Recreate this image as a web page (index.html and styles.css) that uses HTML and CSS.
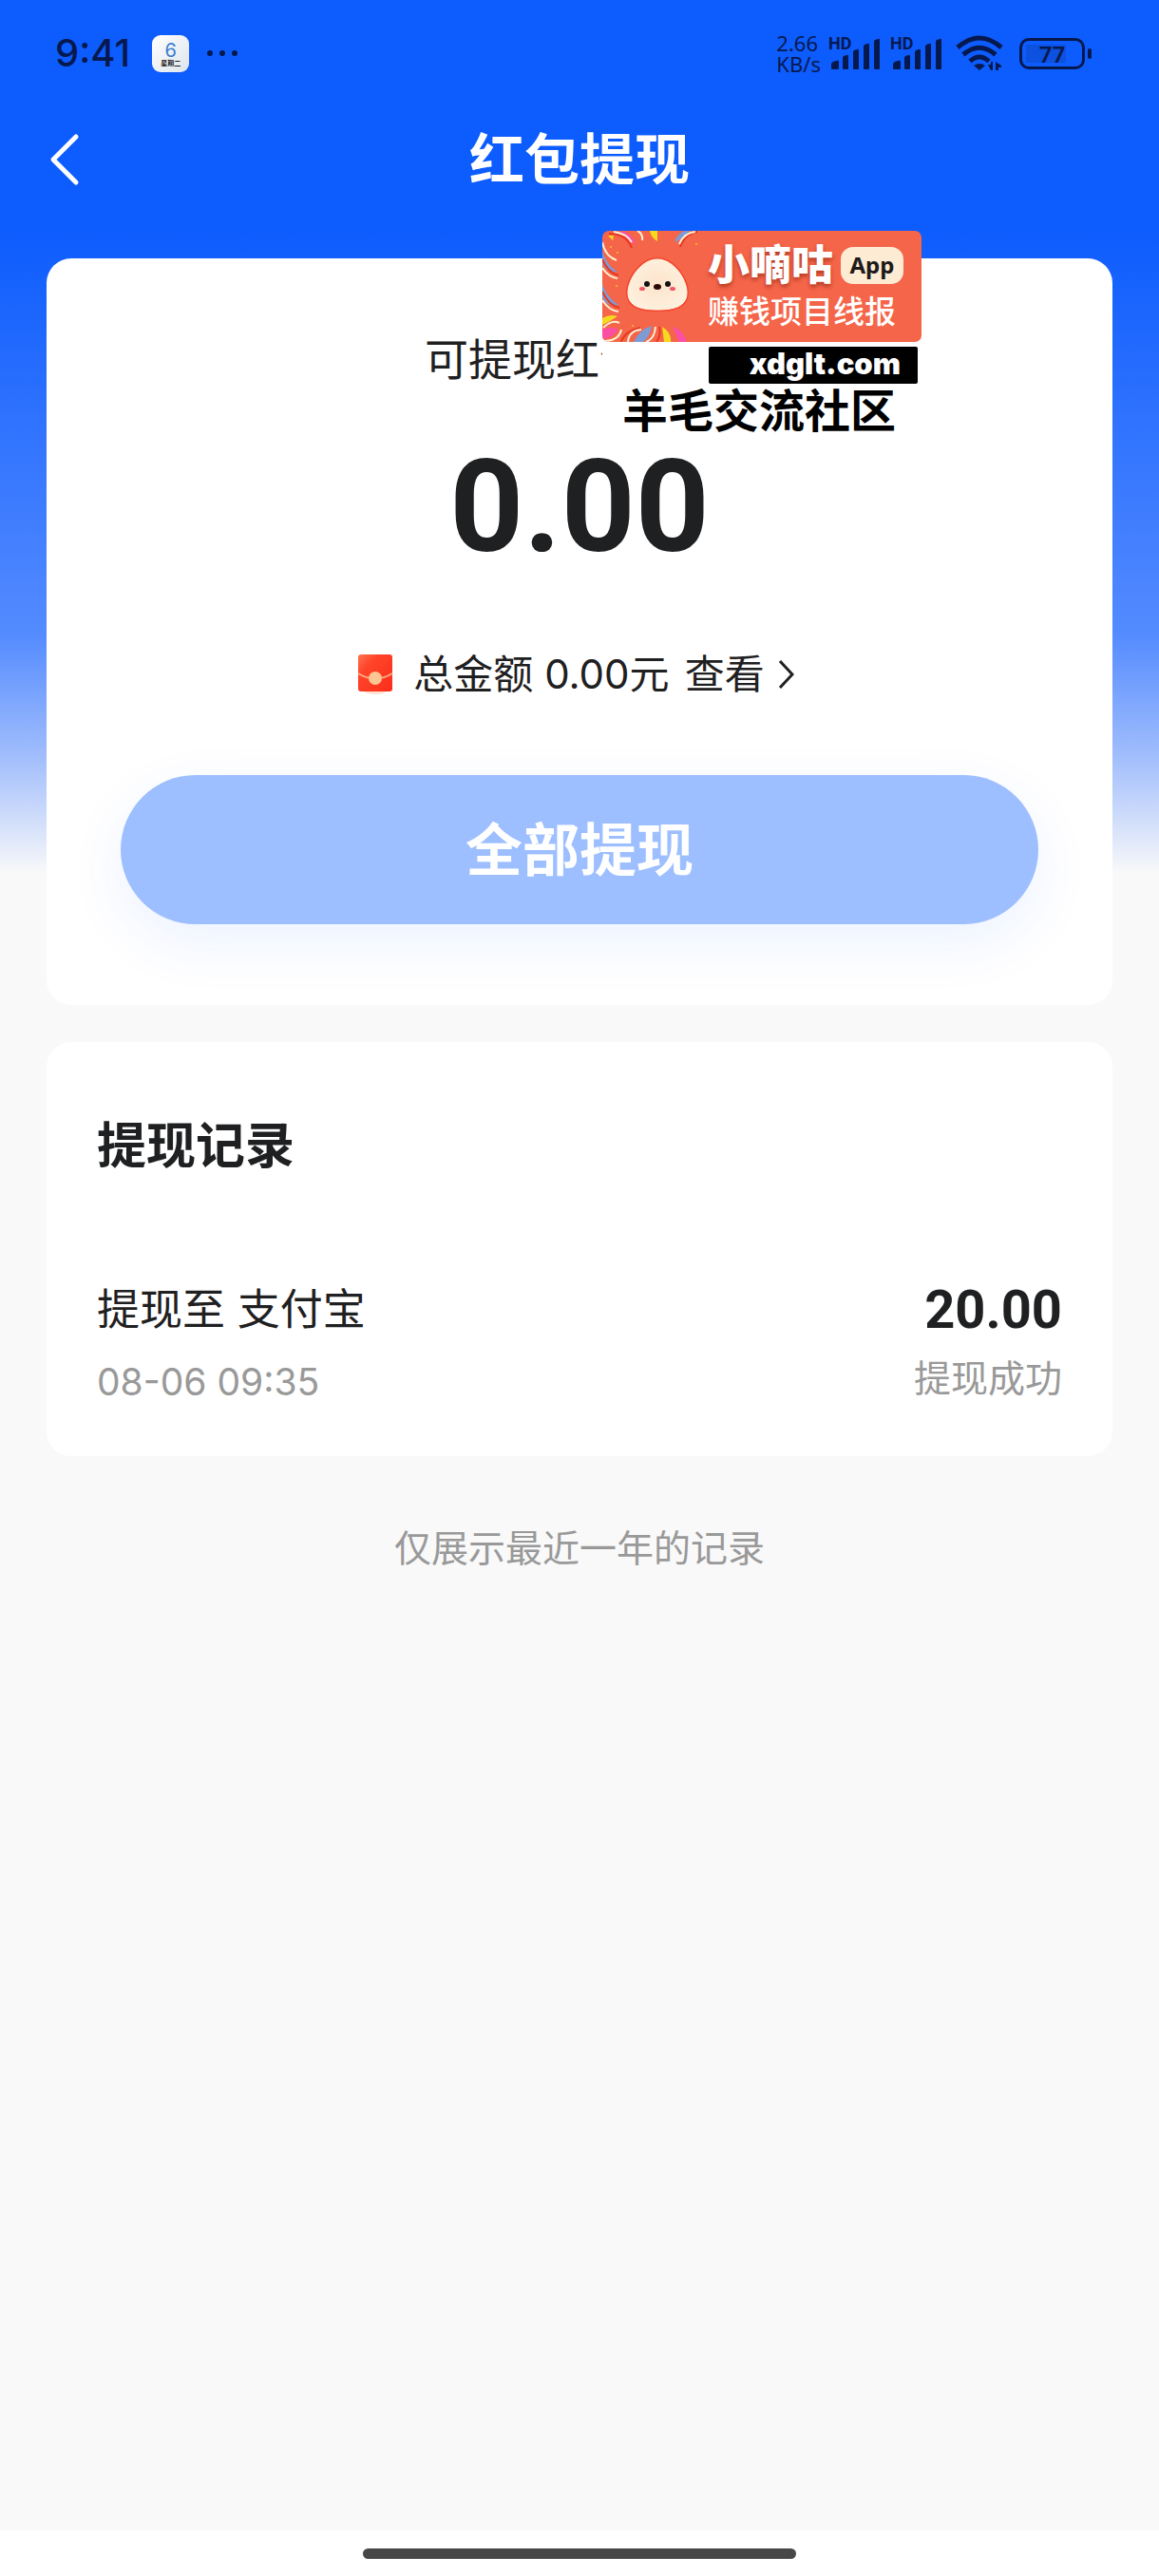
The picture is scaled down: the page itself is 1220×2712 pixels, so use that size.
FILE: index.html
```html
<!DOCTYPE html>
<html lang="zh-CN">
<head>
<meta charset="utf-8">
<meta name="viewport" content="width=device-width, initial-scale=1">
<title>红包提现</title>
<link rel="stylesheet" href="styles.css">
</head>
<body>
<div class="page">
  <div class="status">
    <div class="status-left">
      <span class="clock">9:41</span>
      <span class="calendar"><b class="cal-day">6</b><span class="cal-week">星期二</span></span>
      <svg class="dots" width="34" height="8" viewBox="0 0 34 8"><circle cx="4" cy="4" r="3"/><circle cx="17" cy="4" r="3"/><circle cx="30" cy="4" r="3"/></svg>
    </div>
    <div class="status-right">
      <span class="speed"><span>2.66</span><span>KB/s</span></span>
      <span class="signal"><span class="hd">HD</span>
        <svg width="55" height="36" viewBox="0 0 55 36"><path d="M3 34v-4q0-2 2-3l3-1q3-1 3 1v7q0 1-1 1H4q-1 0-1-1zM15 34V23q0-1 1-2l3-1q2-1 2 1v13q0 1-1 1h-4q-1 0-1-1zM26 34V17q0-1 1-2l3-1q2-1 2 1v19q0 1-1 1h-4q-1 0-1-1zM37 34V11q0-1 1-2l3-1q2-1 2 1v25q0 1-1 1h-4q-1 0-1-1zM48 34V6q0-1 1-2l3-1q2-1 2 1v30q0 1-1 1h-4q-1 0-1-1z"/></svg></span>
      <span class="signal"><span class="hd">HD</span>
        <svg width="55" height="36" viewBox="0 0 55 36"><path d="M3 34v-4q0-2 2-3l3-1q3-1 3 1v7q0 1-1 1H4q-1 0-1-1zM15 34V23q0-1 1-2l3-1q2-1 2 1v13q0 1-1 1h-4q-1 0-1-1zM26 34V17q0-1 1-2l3-1q2-1 2 1v19q0 1-1 1h-4q-1 0-1-1zM37 34V11q0-1 1-2l3-1q2-1 2 1v25q0 1-1 1h-4q-1 0-1-1zM48 34V6q0-1 1-2l3-1q2-1 2 1v30q0 1-1 1h-4q-1 0-1-1z"/></svg></span>
      <svg class="wifi" width="50" height="38" viewBox="0 0 50 38"><g fill="none" stroke="#06194f" stroke-width="5"><path d="M2 13Q25-7 48 13"/><path d="M8 20.500Q25 6 42 20.500"/><path d="M15 27.500Q25 18.500 35 27.500"/></g><path fill="#06194f" d="M19 32q6-4 12 0l-6 5zM34 31h3v-3h2v9h-2zM42 37v-9l6 4v2h-3v3z"/></svg>
      <span class="battery"><span class="battery-body">77</span><span class="battery-tip"></span></span>
    </div>
  </div>

  <header class="nav">
    <button class="back" type="button" aria-label="返回"><svg width="32" height="56" viewBox="0 0 32 56"><path d="M28 4L4 28l24 24" fill="none" stroke="#fff" stroke-width="5" stroke-linecap="round" stroke-linejoin="round"/></svg></button>
    <h1 class="nav-title">红包提现</h1>
  </header>

  <main class="content">
    <section class="card balance">
      <p class="balance-label">可提现红包</p>
      <p class="balance-amount">0.00</p>
      <a class="total" href="#">
        <svg class="envelope" width="38" height="44" viewBox="0 0 38 44">
          <defs><linearGradient id="env" x1="0" y1="0" x2="1" y2="1"><stop offset="0" stop-color="#ff7350"/><stop offset=".3" stop-color="#ff4429"/><stop offset="1" stop-color="#fb2d1c"/></linearGradient></defs>
          <ellipse cx="19" cy="39" rx="12" ry="4" fill="#ffe3d2"/>
          <rect x="1" y="1" width="36" height="39" rx="3" fill="url(#env)"/>
          <path d="M1 21q18 11 36 0" fill="none" stroke="#ffac82" stroke-width="2"/>
          <circle cx="19" cy="26" r="7" fill="#fdc591"/>
        </svg>
        <span>总金额 0.00元</span><span class="total-link">查看</span>
        <svg width="17" height="34" viewBox="0 0 17 34"><path d="M2 3l13 14L2 31" fill="none" stroke="#1f2021" stroke-width="3"/></svg>
      </a>
      <button class="withdraw" type="button">全部提现</button>
    </section>

    <section class="card records">
      <h2 class="records-title">提现记录</h2>
      <div class="record">
        <div class="record-main"><span class="record-name">提现至 支付宝</span><span class="record-sub">08-06 09:35</span></div>
        <div class="record-main record-end"><span class="record-amount">20.00</span><span class="record-sub">提现成功</span></div>
      </div>
    </section>
    <p class="hint">仅展示最近一年的记录</p>
  </main>

  <footer class="home"><span class="home-bar"></span></footer>

  <aside class="promo">
    <div class="promo-banner">
      <svg class="mascot" width="104" height="117" viewBox="0 0 104 117">
        <defs><radialGradient id="face"><stop offset="0" stop-color="#fde3cb"/><stop offset="1" stop-color="#fdf0dc"/></radialGradient></defs>
        <g fill="#7d9bd6"><path d="M0 22q6 16 16 21-12 2-16-9zM0 57q6 14 17 21-12 3-17-8zM76 12Q80-1 92 0q-6 8-16 12zM33 117q6-13 19-17-2 12-9 17z"/></g>
        <g fill="#fb4fa6"><path d="M18 0q14 2 17 14Q22 10 18 0zM0 104q9-4 17 0-6 9-17 10zM74 101q12 4 15 16h-8z"/></g>
        <g fill="#f5d91f"><path d="M50 0h8v11q-7-4-8-11zM0 92q8-5 16-2-7 5-16 9zM63 101q10 6 9 16h-7zM6 5l6 0-1 5z"/></g>
        <g fill="none" stroke="#e8381f" stroke-width="2"><path d="M7 3q19 0 24 15M0 30q6 14 17 17M0 64q7 15 18 17M82 17q5-14 18-16M20 117q3-11 20-15M57 117q5-7 3-16"/></g>
        <g fill="none" stroke="#fff0d4" stroke-width="2"><path d="M12 1q14 2 19 11M37 0q6 3 5 10M81 14q5-12 17-13M0 12q3 15 15 19M0 39q7 10 16 11M0 73q7 11 17 12M1 102q9-9 17-5M3 116q15-1 17-12M27 117q1-12 14-13M46 117q9-3 10-16"/></g>
        <g fill="#f5c51f"><circle cx="16" cy="23" r="1"/><circle cx="15" cy="58" r="1"/><circle cx="32" cy="100" r="1"/><circle cx="9" cy="17" r="1"/><circle cx="99" cy="14" r="1"/></g>
        <path d="M58 30c17 0 31 21 31 35 0 15-14 18-31 18s-31-3-31-18c0-14 14-35 31-35z" fill="url(#face)" stroke="#f4452e" stroke-width="4"/>
        <path d="M58 30c17 0 31 21 31 35 0 15-14 18-31 18s-31-3-31-18c0-14 14-35 31-35z" fill="url(#face)" stroke="#fff5df" stroke-width="1"/>
        <g fill="#111"><circle cx="47" cy="56" r="3"/><circle cx="69" cy="56" r="3"/></g><ellipse cx="58" cy="59" rx="4" ry="3" fill="#2b0907"/>
        <g fill="#f25566"><ellipse cx="42" cy="61" rx="3" ry="2"/><ellipse cx="74" cy="61" rx="3" ry="2"/></g>
      </svg>
      <div class="promo-text">
        <div class="promo-head"><span class="promo-name">小嘀咕</span><span class="promo-app">App</span></div>
        <div class="promo-sub">赚钱项目线报</div>
      </div>
    </div>
    <div class="promo-site">xdglt.com</div>
    <div class="promo-slogan">羊毛交流社区</div>
  </aside>
</div>
</body>
</html>
```

FILE: styles.css
```css
* { box-sizing: border-box; }

body {
  margin: 0;
  font-family: Inter, "Noto Sans CJK SC", sans-serif;
  color: #1f2021;
}

h1, h2, p { margin: 0; font-weight: 400; }
button { border: 0; padding: 0; font-family: inherit; cursor: pointer; }
svg { display: block; flex: none; }

.page {
  position: relative;
  display: flex;
  flex-direction: column;
  min-height: 100vh;
  background: linear-gradient(#0d5cfd 240px, #548bff 668px, #a3bffc 800px, #f9f9f9 920px);
}

/* system status bar */
.status {
  display: flex;
  justify-content: space-between;
  height: 112px;
  padding: 0 71px 0 58px;
  color: #06194f;
  fill: #06194f;
}
.status-left, .status-right { display: flex; align-items: center; }
.clock { font-size: 40px; font-weight: 500; line-height: 48px; }
.calendar {
  display: flex;
  flex-direction: column;
  align-items: center;
  width: 39px;
  height: 39px;
  margin: 0 18px 0 23px;
  border-radius: 9px;
  background: linear-gradient(135deg, #fff, #dde5ec);
}
.cal-day { font-size: 20px; line-height: 26px; height: 25px; font-weight: 400; color: #3b7dd2; padding-top: 3px; }
.cal-week { font-size: 7px; line-height: 9px; font-weight: 700; color: #222; }
.speed {
  display: flex;
  flex-direction: column;
  margin-right: 8px;
  font-family: "Noto Sans", sans-serif;
  font-size: 22px;
  line-height: 22px;
}
.signal { position: relative; margin-right: 10px; }
.hd { position: absolute; left: 0; top: 0; font-family: Roboto, sans-serif; font-size: 18px; line-height: 16px; font-weight: 700; }
.wifi { margin: 0 17px 0 4px; }
.battery { display: flex; align-items: center; gap: 3px; }
.battery-body {
  width: 69px;
  height: 33px;
  border: 3px solid #06194f;
  border-radius: 10px;
  font-family: "Noto Sans", sans-serif;
  font-size: 24px;
  line-height: 28px;
  font-weight: 600;
  text-align: center;
  background: linear-gradient(#0c51df, #0c51df) 4px 4px / 42px 19px no-repeat;
}
.battery-tip { width: 4px; height: 11px; border-radius: 2px; background: #06194f; }

.nav {
  display: grid;
  grid-template-columns: 1fr auto 1fr;
  align-items: center;
  height: 112px;
  padding: 0 52px;
}
.back { width: 32px; background: none; }
.nav-title { font-size: 58px; line-height: 80px; font-weight: 700; color: #fff; }

.content { flex: 1; padding: 48px 49px; }
.card { border-radius: 26px; background: #fff; }

.balance {
  display: flex;
  flex-direction: column;
  align-items: center;
  padding: 74px 78px 85px;
}
.balance-label { width: 326px; font-size: 46px; line-height: 64px; }
.balance-amount {
  margin-top: 44px;
  font-family: Roboto, sans-serif;
  font-size: 136px;
  line-height: 160px;
  font-weight: 700;
}
.total {
  display: flex;
  align-items: center;
  margin-top: 64px;
  padding-right: 8px;
  font-size: 42px;
  line-height: 64px;
  color: inherit;
  text-decoration: none;
}
.envelope { margin-right: 21px; }
.total-link { margin: 0 14px 0 16px; }
.withdraw {
  width: 100%;
  height: 157px;
  margin-top: 74px;
  border-radius: 79px;
  background: #9dbfff;
  box-shadow: 0 20px 60px rgba(13, 92, 253, .08);
  color: #fff;
  font-size: 60px;
  line-height: 80px;
  font-weight: 700;
}

.records { margin-top: 39px; padding: 72px 53px 48px; }
.records-title { font-size: 52px; line-height: 76px; font-weight: 700; }
.record { display: flex; justify-content: space-between; margin-top: 96px; }
.record-main { display: flex; flex-direction: column; gap: 8px; }
.record-end { align-items: flex-end; gap: 4px; }
.record-name, .record-amount { line-height: 76px; }
.record-name { font-size: 45px; }
.record-amount { font-family: Roboto, sans-serif; font-size: 56px; font-weight: 700; }
.record-sub { font-size: 39px; line-height: 60px; color: #999; }
.hint { margin-top: 67px; font-size: 39px; line-height: 60px; text-align: center; color: #999; }

.home { display: flex; justify-content: center; padding: 19px 0 18px; background: #fff; }
.home-bar { width: 456px; height: 11px; border-radius: 6px; background: #474747; }

/* sponsor overlay floating above the page */
.promo {
  position: absolute;
  z-index: 1;
  left: calc(50% + 24px);
  top: 243px;
  width: 336px;
  color: #000;
}
.promo::before {
  content: "";
  position: absolute;
  z-index: -1;
  inset: 60px 0 0;
  background: #fff;
}
.promo-banner {
  display: flex;
  gap: 7px;
  height: 117px;
  border-radius: 7px;
  overflow: hidden;
  background: #f56549;
  color: #fff;
}
.promo-text { padding-top: 10px; }
.promo-head { display: flex; align-items: center; gap: 8px; }
.promo-name { font-size: 44px; line-height: 52px; font-weight: 900; text-shadow: 0 3px 4px rgba(120, 20, 0, .5); }
.promo-app {
  width: 66px;
  height: 39px;
  border-radius: 13px;
  background: #fdebd3;
  color: #1c1a1a;
  font-family: "Noto Sans", sans-serif;
  font-size: 24px;
  line-height: 38px;
  font-weight: 700;
  text-align: center;
}
.promo-sub { font-size: 33px; line-height: 46px; font-weight: 500; white-space: nowrap; }
.promo-site {
  width: 220px;
  height: 39px;
  margin: 5px 0 0 112px;
  padding-right: 18px;
  border-radius: 2px;
  background: #000;
  color: #fff;
  font-size: 31px;
  line-height: 36px;
  font-weight: 900;
  text-align: right;
}
.promo-slogan { padding: 0 0 8px 21px; font-size: 48px; line-height: 58px; font-weight: 700; white-space: nowrap; }
```
